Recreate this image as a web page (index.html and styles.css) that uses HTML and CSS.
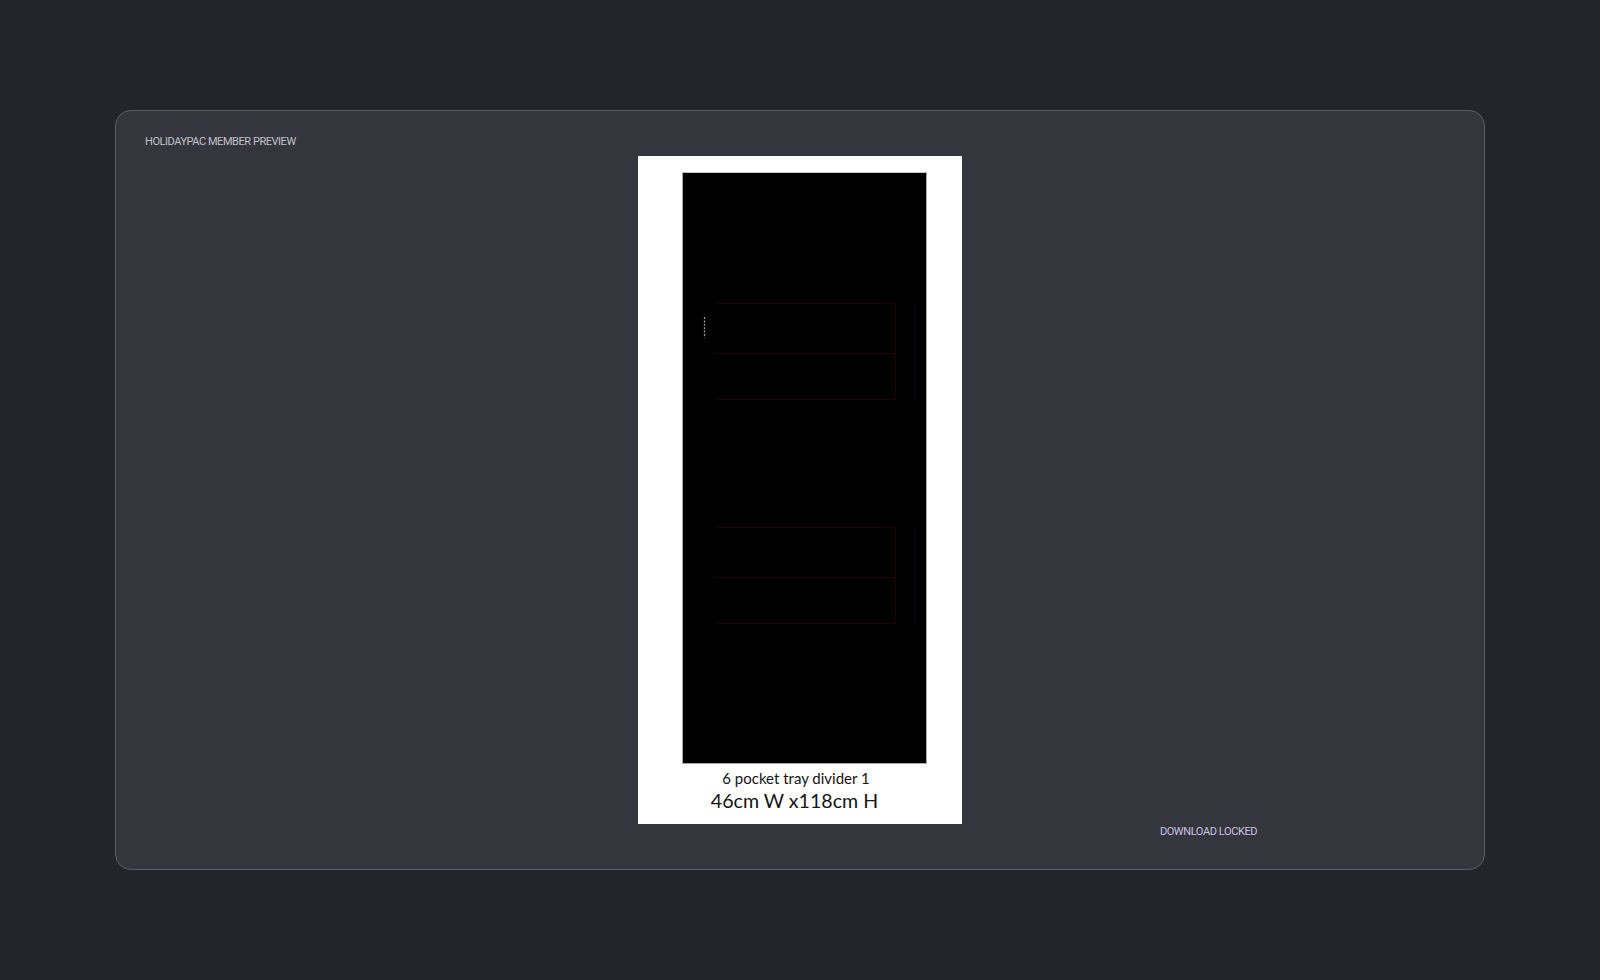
FILE: index.html
```html
<!DOCTYPE html>
<html lang="en">
<head>
<meta charset="utf-8">
<title>HolidayPac Member Preview</title>
<link rel="stylesheet" href="styles.css">
</head>
<body>
<div class="stage">
  <section class="panel">
    <div class="col-left">
      <div class="label">HOLIDAYPAC MEMBER PREVIEW</div>
    </div>
    <div class="sheet">
      <div class="artwork">
        <svg width="243" height="590" viewBox="0 0 243 590" xmlns="http://www.w3.org/2000/svg">
          <g fill="none" stroke-width="1">
            <path d="M33 130.5H212.5V226.5H33" stroke="#1f0406"/>
            <path d="M30 180.5H213" stroke="#1f0406"/>
            <path d="M209.5 132V225" stroke="#0e0407"/>
            <path d="M231.5 130V228" stroke="#070714"/>
            <path d="M33 354.5H212.5V450.5H33" stroke="#1f0406"/>
            <path d="M30 404.5H213" stroke="#1f0406"/>
            <path d="M209.5 356V449" stroke="#0e0407"/>
            <path d="M231.5 354V452" stroke="#070714"/>
          </g>
          <path d="M21.5 144V165" stroke="#9a9a9a" stroke-width="1.2" stroke-dasharray="2 1.4"/>
        </svg>
      </div>
      <div class="cap1">6 pocket tray divider 1</div>
      <div class="cap2">46cm W x118cm H</div>
    </div>
    <div class="col-right">
      <div class="locked">DOWNLOAD LOCKED</div>
    </div>
  </section>
</div>
</body>
</html>
```

FILE: styles.css
```css
html, body {
  margin: 0;
  padding: 0;
  background: #24252a;
}

.stage {
  width: 1600px;
  height: 980px;
  display: flex;
  align-items: center;
  justify-content: center;
}

.panel {
  box-sizing: border-box;
  width: 1370px;
  height: 760px;
  background: #35353e;
  border: 1.5px solid #5c5d64;
  border-radius: 16px;
  display: grid;
  grid-template-columns: 1fr 324px 1fr;
  padding: 0 29px;
}

.col-left {
  padding-top: 24px;
}

.label {
  font-family: Roboto, "Liberation Sans", sans-serif;
  font-size: 11px;
  line-height: 14px;
  letter-spacing: -0.45px;
  color: #c2c2ca;
}

.sheet {
  align-self: center;
  width: 324px;
  height: 668px;
  background: #ffffff;
  box-sizing: border-box;
  padding: 16px 35px 0 44px;
  display: flex;
  flex-direction: column;
  align-items: center;
}

.artwork {
  width: 245px;
  height: 592px;
  box-sizing: border-box;
  background: #000000;
  border: 1px solid #a8a8a8;
  border-top-color: #c8c8c8;
  flex: none;
}

.artwork svg {
  display: block;
}

.cap1 {
  margin-left: -17px;
  margin-top: 5px;
  font-family: Lato, "Open Sans", sans-serif;
  font-size: 15px;
  line-height: 18px;
  color: #141414;
  white-space: nowrap;
}

.cap2 {
  margin-left: -20px;
  margin-top: 3px;
  font-family: Lato, "Open Sans", sans-serif;
  font-size: 19.6px;
  line-height: 22px;
  color: #141414;
  white-space: nowrap;
}

.col-right {
  align-self: end;
  display: flex;
  justify-content: center;
  padding-bottom: 30px;
}

.locked {
  font-family: Roboto, "Liberation Sans", sans-serif;
  font-size: 11px;
  line-height: 14px;
  letter-spacing: -0.4px;
  color: #cbc2e0;
}
```
